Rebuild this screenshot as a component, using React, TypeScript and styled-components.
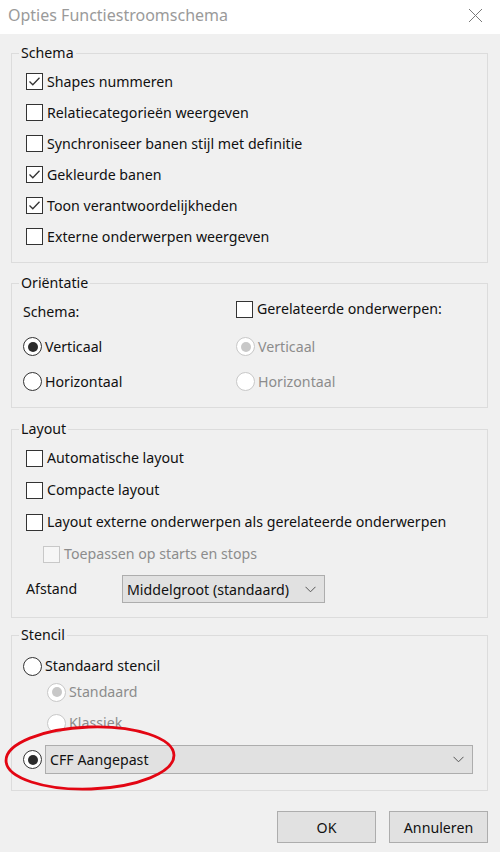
import React from "react";
import styled, { createGlobalStyle } from "styled-components";

const GlobalStyle = createGlobalStyle`
  html, body { margin: 0; padding: 0; background: #f0f0f0; }
  body {
    font-family: "Noto Sans", "Open Sans", sans-serif;
    font-size: 14.2px;
    color: #111111;
  }
`;

const Window = styled.div`
  position: relative;
  width: 500px;
  height: 852px;
  background: #f0f0f0;
  overflow: hidden;
  display: flex;
  flex-direction: column;
`;

const TitleBar = styled.div`
  height: 34px;
  flex: none;
  box-sizing: border-box;
  background: #ffffff;
  display: flex;
  align-items: center;
  justify-content: space-between;
  padding: 0 17px 4px 8px;
`;

const Title = styled.span`
  font-size: 16px;
  color: #9a9a9a;
  white-space: nowrap;
`;

const CloseIcon = styled.svg`
  width: 15px;
  height: 15px;
  display: block;
`;

const Body = styled.div`
  display: flex;
  flex-direction: column;
  padding: 9px 12px 0 11px;
`;

const Group = styled.fieldset<{ $mt: number }>`
  margin: ${(p) => p.$mt}px 0 0;
  padding: 0;
  border: 1px solid #dcdcdc;
  min-width: 0;
`;

const Legend = styled.legend`
  margin-left: 7px;
  padding: 0 2px;
  height: 20px;
  line-height: 20px;
  font-size: 14.2px;
  color: #111111;
`;

const GroupContent = styled.div<{ $pt: number; $pb: number }>`
  display: flex;
  flex-direction: column;
  padding: ${(p) => p.$pt}px 14px ${(p) => p.$pb}px 11px;
`;

const OrientGrid = styled.div`
  display: grid;
  grid-template-columns: 213px 1fr;
  grid-template-rows: 34px 35px 35px;
  padding: 2px 14px 8px 11px;
`;

const Row = styled.div<{ $h: number; $indent: number; $mt: number }>`
  display: flex;
  align-items: center;
  height: ${(p) => p.$h}px;
  margin-left: ${(p) => p.$indent}px;
  margin-top: ${(p) => p.$mt}px;
`;

const Box = styled.span<{ $disabled?: boolean }>`
  flex: none;
  width: 17px;
  height: 17px;
  box-sizing: border-box;
  border: 1px solid ${(p) => (p.$disabled ? "#c8c8c8" : "#333333")};
  background: ${(p) => (p.$disabled ? "#f6f6f6" : "#ffffff")};
  display: flex;
  align-items: center;
  justify-content: center;
`;

const Circle = styled.span<{ $disabled?: boolean }>`
  flex: none;
  width: 19px;
  height: 19px;
  box-sizing: border-box;
  border-radius: 50%;
  border: 1px solid ${(p) => (p.$disabled ? "#c8c8c8" : "#333333")};
  background: #ffffff;
  display: flex;
  align-items: center;
  justify-content: center;
`;

const Dot = styled.span<{ $disabled?: boolean }>`
  width: 10px;
  height: 10px;
  border-radius: 50%;
  background: ${(p) => (p.$disabled ? "#c8c8c8" : "#2b2b2b")};
`;

const Label = styled.span<{ $disabled?: boolean; $gap: number }>`
  margin-left: ${(p) => p.$gap}px;
  white-space: nowrap;
  line-height: 20px;
  color: ${(p) => (p.$disabled ? "#8c8c8c" : "#111111")};
`;

const FieldLabel = styled.span<{ $w: number; $indent: number }>`
  flex: none;
  width: ${(p) => p.$w}px;
  margin-left: ${(p) => p.$indent}px;
  line-height: 20px;
  white-space: nowrap;
`;

const Select = styled.div<{ $w?: number; $h: number; $ml: number }>`
  box-sizing: border-box;
  ${(p) => (p.$w ? `width: ${p.$w}px; flex: none;` : "flex: 1;")}
  height: ${(p) => p.$h}px;
  margin-left: ${(p) => p.$ml}px;
  border: 1px solid #adadad;
  background: #e1e1e1;
  display: flex;
  align-items: center;
  justify-content: space-between;
  padding: 0 8px 0 4px;
  white-space: nowrap;
`;

const Chevron = styled.svg`
  width: 11px;
  height: 7px;
  display: block;
`;

const ButtonBar = styled.div`
  display: flex;
  justify-content: flex-end;
  gap: 13px;
  margin-top: 20px;
`;

const Button = styled.div`
  box-sizing: border-box;
  width: 99px;
  height: 32px;
  border: 1px solid #adadad;
  background: #e1e1e1;
  display: flex;
  align-items: center;
  justify-content: center;
  color: #111111;
`;

const Annotation = styled.svg`
  position: absolute;
  left: 2px;
  top: 722px;
  width: 176px;
  height: 72px;
  pointer-events: none;
`;

type CheckProps = {
  label: string;
  checked?: boolean;
  disabled?: boolean;
  indent?: number;
  h?: number;
  mt?: number;
};

function Check({ label, checked, disabled, indent = 3, h = 31, mt = 0 }: CheckProps) {
  return (
    <Row $h={h} $indent={indent} $mt={mt}>
      <Box $disabled={disabled}>
        {checked && (
          <svg width="13" height="13" viewBox="0 0 13 13">
            <polyline points="1.5,6.5 4.8,9.8 11.5,2.8" fill="none" stroke="#333" strokeWidth="1.3" />
          </svg>
        )}
      </Box>
      <Label $disabled={disabled} $gap={4}>
        {label}
      </Label>
    </Row>
  );
}

type RadioProps = {
  label: string;
  checked?: boolean;
  disabled?: boolean;
  indent?: number;
  h?: number;
  mt?: number;
};

function Radio({ label, checked, disabled, indent = 0, h = 35, mt = 0 }: RadioProps) {
  return (
    <Row $h={h} $indent={indent} $mt={mt}>
      <Circle $disabled={disabled}>{checked && <Dot $disabled={disabled} />}</Circle>
      <Label $disabled={disabled} $gap={3}>
        {label}
      </Label>
    </Row>
  );
}

function ChevronDown() {
  return (
    <Chevron viewBox="0 0 11 7">
      <polyline points="0.5,0.8 5.5,5.8 10.5,0.8" fill="none" stroke="#555" strokeWidth="1" />
    </Chevron>
  );
}

export default function App() {
  return (
    <>
      <GlobalStyle />
      <Window>
        <TitleBar>
          <Title>Opties Functiestroomschema</Title>
          <CloseIcon viewBox="0 0 15 15">
            <path d="M1 1 L14 14 M14 1 L1 14" stroke="#7a7a7a" strokeWidth="1" fill="none" />
          </CloseIcon>
        </TitleBar>
        <Body>
          <Group $mt={0}>
            <Legend>Schema</Legend>
            <GroupContent $pt={3} $pb={10}>
              <Check label="Shapes nummeren" checked />
              <Check label="Relatiecategorieën weergeven" />
              <Check label="Synchroniseer banen stijl met definitie" />
              <Check label="Gekleurde banen" checked />
              <Check label="Toon verantwoordelijkheden" checked />
              <Check label="Externe onderwerpen weergeven" />
            </GroupContent>
          </Group>

          <Group $mt={10}>
            <Legend>Oriëntatie</Legend>
            <OrientGrid>
              <Row $h={34} $indent={0} $mt={0}>
                <FieldLabel $w={100} $indent={0}>
                  Schema:
                </FieldLabel>
              </Row>
              <Check label="Gerelateerde onderwerpen:" indent={0} h={28} />
              <Radio label="Verticaal" checked />
              <Radio label="Verticaal" checked disabled />
              <Radio label="Horizontaal" />
              <Radio label="Horizontaal" disabled />
            </OrientGrid>
          </Group>

          <Group $mt={11}>
            <Legend>Layout</Legend>
            <GroupContent $pt={3} $pb={14}>
              <Check label="Automatische layout" h={32} />
              <Check label="Compacte layout" h={32} />
              <Check label="Layout externe onderwerpen als gerelateerde onderwerpen" h={32} />
              <Check label="Toepassen op starts en stops" disabled indent={20} h={32} />
              <Row $h={28} $indent={0} $mt={5}>
                <FieldLabel $w={96} $indent={3}>
                  Afstand
                </FieldLabel>
                <Select $w={203} $h={28} $ml={0}>
                  <span>Middelgroot (standaard)</span>
                  <ChevronDown />
                </Select>
              </Row>
            </GroupContent>
          </Group>

          <Group $mt={7}>
            <Legend>Stencil</Legend>
            <GroupContent $pt={8} $pb={16}>
              <Radio label="Standaard stencil" h={26} />
              <Radio label="Standaard" checked disabled indent={24} h={26} />
              <Radio label="Klassiek" disabled indent={24} h={26} mt={5} />
              <Row $h={29} $indent={0} $mt={9}>
                <Circle>
                  <Dot />
                </Circle>
                <Select $h={29} $ml={3}>
                  <span>CFF Aangepast</span>
                  <ChevronDown />
                </Select>
              </Row>
            </GroupContent>
          </Group>

          <ButtonBar>
            <Button>OK</Button>
            <Button>Annuleren</Button>
          </ButtonBar>
        </Body>
        <Annotation viewBox="0 0 176 72">
          <ellipse
            cx="88"
            cy="36"
            rx="84"
            ry="31"
            fill="none"
            stroke="#e30613"
            strokeWidth="2.8"
            transform="rotate(-2 88 36)"
          />
        </Annotation>
      </Window>
    </>
  );
}
